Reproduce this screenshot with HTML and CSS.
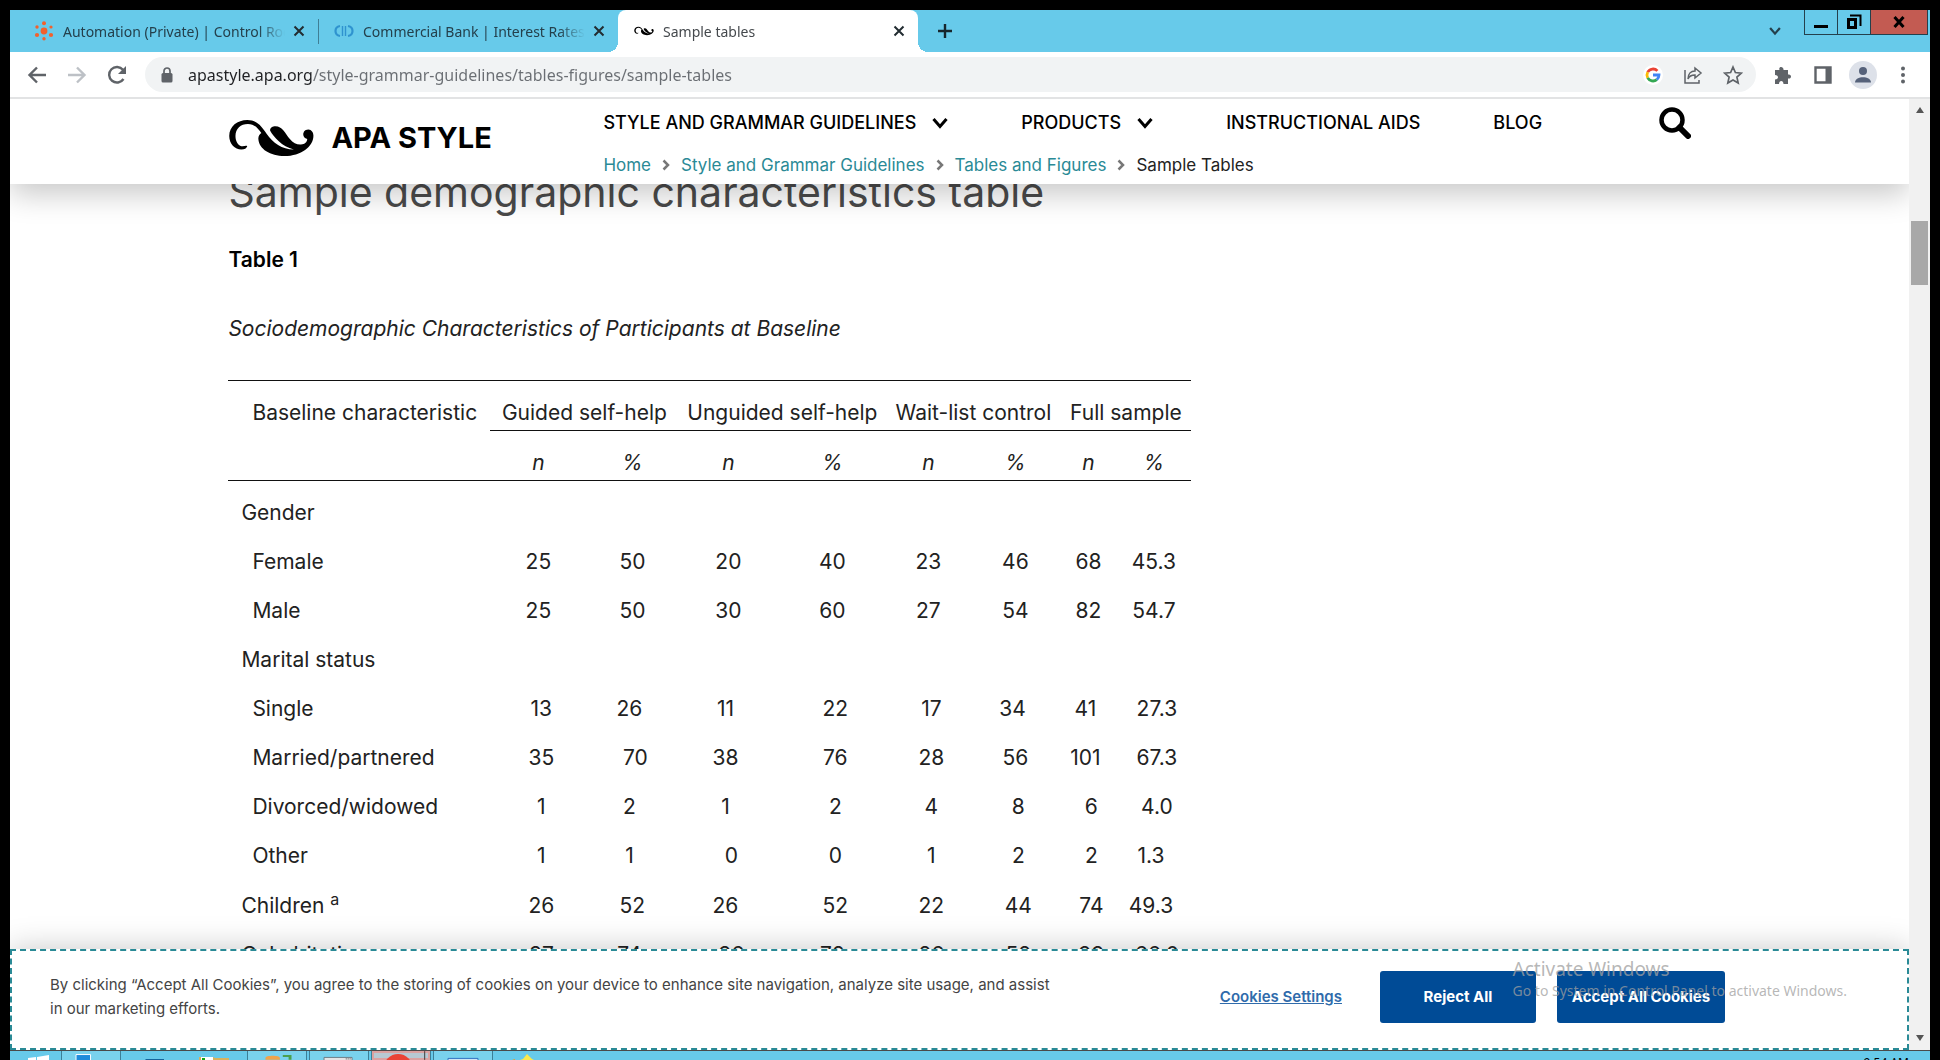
FILE: index.html
```html
<!DOCTYPE html>
<html lang="en">
<head>
<meta charset="utf-8">
<meta name="viewport" content="width=device-width, initial-scale=1">
<title>Sample tables</title>
<link rel="stylesheet" href="styles.css">
</head>
<body>
<svg class="defs" aria-hidden="true">
  <symbol id="apa-mark" viewBox="40 54 264 116">
    <path d="M98 137C96 143 90 147 80 147C60 147 43 130 43 106C43 76 68 57 98 57C128 57 143 78 157 99C176 127 204 147 240 147C204 139 178 108 168 90C166 81 175 76 184 76C205 76 214 98 228 115C238 127 250 133 262 132C274 131 281 124 281 115C272 112 268 106 269 98C271 89 278 86 285 86C294 87 300 94 300 105C300 138 262 167 212 167C168 167 134 146 132 116C131 107 135 101 141 97C130 80 118 69 100 69C78 69 62 83 62 106C62 122 70 134 80 137C87 139 93 134 98 137Z"/>
  </symbol>
  <symbol id="close" viewBox="0 0 12 12"><path d="M1.5 1.5l9 9M10.5 1.5l-9 9" fill="none" stroke="currentColor" stroke-width="2"/></symbol>
  <symbol id="chev-down" viewBox="0 0 16 12"><path d="M1.5 2l6.500 7.500L14.500 2" fill="none" stroke="currentColor" stroke-width="3"/></symbol>
  <symbol id="chev-right" viewBox="0 0 8 12"><path d="M1.500 1.500L6 6l-4.500 4.500" fill="none" stroke="currentColor" stroke-width="2.500"/></symbol>
</svg>

<div class="browser">
  <div class="tabstrip">
    <div class="tab">
      <svg class="favicon" viewBox="0 0 20 20" fill="#f2612c"><circle cx="10" cy="10" r="3.400"/><circle cx="10" cy="2.300" r="2"/><circle cx="10" cy="17.700" r="1.700"/><circle cx="3" cy="6" r="1.700"/><circle cx="17" cy="6" r="1.600"/><circle cx="3" cy="14" r="2.100"/><circle cx="17" cy="14" r="2.100"/></svg>
      <span class="tab-title">Automation (Private) | Control Room</span>
      <button class="tab-close" aria-label="Close tab"><svg><use href="#close"/></svg></button>
    </div>
    <div class="tab divided">
      <svg class="favicon" viewBox="0 0 20 20" fill="none" stroke="#2f93cf" stroke-width="2.200"><path d="M6 5C0 6 0 14 6 15M14 5c6 1 6 9 0 10"/><path d="M8.500 5v10M11.500 5v10" stroke-width="1.400"/></svg>
      <span class="tab-title">Commercial Bank | Interest Rates</span>
      <button class="tab-close" aria-label="Close tab"><svg><use href="#close"/></svg></button>
    </div>
    <div class="tab active">
      <svg class="favicon"><use href="#apa-mark"/></svg>
      <span class="tab-title">Sample tables</span>
      <button class="tab-close" aria-label="Close tab"><svg><use href="#close"/></svg></button>
    </div>
    <button class="new-tab" aria-label="New tab"><svg viewBox="0 0 16 16"><path d="M8 1v14M1 8h14" stroke="currentColor" stroke-width="2.400"/></svg></button>
    <button class="tab-search" aria-label="Search tabs"><svg><use href="#chev-down"/></svg></button>
    <div class="win-buttons">
      <button aria-label="Minimize"><svg viewBox="0 0 16 16"><path d="M1 12.500h14" stroke="currentColor" stroke-width="3"/></svg></button>
      <button aria-label="Restore"><svg viewBox="0 0 16 16"><path d="M2.500 5.500h7v8h-7z" fill="none" stroke="currentColor" stroke-width="3"/><path d="M4 1.500h10.500V12" fill="none" stroke="currentColor" stroke-width="2"/></svg></button>
      <button class="win-close" aria-label="Close"><svg viewBox="0 0 16 16"><path d="M3.500 3l9 10M12.500 3l-9 10" stroke="currentColor" stroke-width="3"/></svg></button>
    </div>
  </div>

  <div class="toolbar">
    <button class="tool" aria-label="Back"><svg viewBox="0 0 20 20"><path d="M19 10H3M10 2.500L2.500 10l7.500 7.500" fill="none" stroke="#5f6368" stroke-width="2.400"/></svg></button>
    <button class="tool" aria-label="Forward"><svg viewBox="0 0 20 20"><path d="M1 10h16M10 2.500l7.500 7.500-7.500 7.500" fill="none" stroke="#bdc1c6" stroke-width="2.400"/></svg></button>
    <button class="tool" aria-label="Reload"><svg viewBox="0 0 20 20"><path d="M16.500 14A7.800 7.800 0 1 1 16 4.800" fill="none" stroke="#5f6368" stroke-width="2.400"/><path d="M19 1v8h-8z" fill="#5f6368"/></svg></button>
    <div class="omnibox">
      <svg class="lock" viewBox="0 0 12 16"><rect x="0.500" y="6" width="11" height="9.500" rx="1.500" fill="#5f6368"/><path d="M3 7V4a3 3 0 0 1 6 0v3" fill="none" stroke="#5f6368" stroke-width="1.700"/></svg>
      <input class="url" type="text" aria-label="Address" value="apastyle.apa.org/style-grammar-guidelines/tables-figures/sample-tables">
      <button class="tool" aria-label="Google"><svg viewBox="0 0 20 20"><circle cx="10" cy="10" r="10" fill="#fff"/><g fill="none" stroke-width="2.800"><path d="M14.400 5.900A6 6 0 0 0 4.700 7.200" stroke="#ea4335"/><path d="M4.700 7.200a6 6 0 0 0 0 5.600" stroke="#fbbc05"/><path d="M4.700 12.800a6 6 0 0 0 9.100 1.800" stroke="#34a853"/><path d="M13.800 14.600A6 6 0 0 0 16 10h-6" stroke="#4285f4"/></g></svg></button>
      <button class="tool" aria-label="Share"><svg viewBox="0 0 20 20" fill="none" stroke="#5f6368" stroke-width="1.500"><path d="M2 5v13h14v-3"/><path d="M12 3l6 5-6 5v-3c-4 0-6 1.500-7 4 0-5 3-8 7-8z"/></svg></button>
      <button class="tool" aria-label="Bookmark"><svg viewBox="0 0 20 20"><path d="M10 2l2.400 5.500 6 .6-4.500 4 1.300 5.900L10 15l-5.200 3 1.300-5.900-4.500-4 6-.6z" fill="none" stroke="#5f6368" stroke-width="1.700"/></svg></button>
    </div>
    <button class="tool" aria-label="Extensions"><svg viewBox="0 0 20 20"><path d="M2 5h4.500C5 1 11 1 10.500 5H15v4.500c4-1 4 5 0 4V19h-4.500c0-4-4.500-4-4.500 0H2v-4.500c4 0 4-4.500 0-4.500z" fill="#5f6368"/></svg></button>
    <button class="tool" aria-label="Side panel"><svg viewBox="0 0 20 20"><path d="M2.500 2.500h15v15h-15z" fill="none" stroke="#5f6368" stroke-width="2.400"/><path d="M12.500 2h5v16h-5z" fill="#5f6368"/></svg></button>
    <button class="tool" aria-label="Profile"><svg class="avatar" viewBox="0 0 28 28"><circle cx="14" cy="14" r="14" fill="#dde1e9"/><circle cx="14" cy="10" r="4" fill="#56627a"/><path d="M6 21.500c0-7 16-7 16 0z" fill="#56627a"/></svg></button>
    <button class="tool" aria-label="Menu"><svg viewBox="0 0 20 20" fill="#5f6368"><circle cx="10" cy="3.500" r="2"/><circle cx="10" cy="10" r="2"/><circle cx="10" cy="16.500" r="2"/></svg></button>
  </div>

  <div class="viewport">
    <div class="page">
      <header class="site-header">
        <div class="container header-row">
          <a class="brand" href="#"><svg class="brand-mark"><use href="#apa-mark"/></svg><span>APA STYLE</span></a>
          <div class="header-nav">
            <nav class="main-nav" aria-label="Main">
              <a href="#">STYLE AND GRAMMAR GUIDELINES<svg><use href="#chev-down"/></svg></a>
              <a href="#">PRODUCTS<svg><use href="#chev-down"/></svg></a>
              <a href="#">INSTRUCTIONAL AIDS</a>
              <a href="#">BLOG</a>
            </nav>
            <nav class="crumbs" aria-label="Breadcrumb">
              <a href="#">Home</a><svg><use href="#chev-right"/></svg>
              <a href="#">Style and Grammar Guidelines</a><svg><use href="#chev-right"/></svg>
              <a href="#">Tables and Figures</a><svg><use href="#chev-right"/></svg>
              <span>Sample Tables</span>
            </nav>
          </div>
          <button class="search" aria-label="Search"><svg viewBox="0 0 32 32"><circle cx="13" cy="13" r="10.500" fill="none" stroke="currentColor" stroke-width="4.500"/><path d="M20.500 20.500L29 29" stroke="currentColor" stroke-width="6" stroke-linecap="round"/></svg></button>
        </div>
      </header>

      <main class="content">
        <div class="container">
          <h1>Sample demographic characteristics table</h1>
          <p class="table-number">Table 1</p>
          <p class="table-title">Sociodemographic Characteristics of Participants at Baseline</p>
          <table class="data">
            <colgroup><col class="c-label"><col class="c-n1"><col class="c-p1"><col class="c-n2"><col class="c-p2"><col class="c-n3"><col class="c-p3"><col class="c-n4"><col class="c-p4"></colgroup>
            <thead>
              <tr><th class="corner" scope="col">Baseline characteristic</th><th class="group" colspan="2" scope="colgroup">Guided self-help</th><th class="group" colspan="2" scope="colgroup">Unguided self-help</th><th class="group" colspan="2" scope="colgroup">Wait-list control</th><th class="group" colspan="2" scope="colgroup">Full sample</th></tr>
              <tr class="units"><td></td><th scope="col">n</th><th scope="col">%</th><th scope="col">n</th><th scope="col">%</th><th scope="col">n</th><th scope="col">%</th><th scope="col">n</th><th scope="col">%</th></tr>
            </thead>
            <tbody>
              <tr><th scope="row">Gender</th><td colspan="8"></td></tr>
              <tr class="sub"><th scope="row">Female</th><td>25</td><td>50</td><td>20</td><td>40</td><td>23</td><td>46</td><td>68</td><td>45.3</td></tr>
              <tr class="sub"><th scope="row">Male</th><td>25</td><td>50</td><td>30</td><td>60</td><td>27</td><td>54</td><td>82</td><td>54.7</td></tr>
              <tr><th scope="row">Marital status</th><td colspan="8"></td></tr>
              <tr class="sub"><th scope="row">Single</th><td>&nbsp;13</td><td>26&nbsp;</td><td>11&nbsp;</td><td>&nbsp;22</td><td>&nbsp;17</td><td>34&nbsp;</td><td>41&nbsp;</td><td>&nbsp;27.3</td></tr>
              <tr class="sub"><th scope="row">Married/partnered</th><td>&nbsp;35</td><td>&nbsp;70</td><td>38&nbsp;</td><td>&nbsp;76</td><td>&nbsp;28</td><td>56</td><td>101&nbsp;</td><td>&nbsp;67.3</td></tr>
              <tr class="sub"><th scope="row">Divorced/widowed</th><td>&nbsp;1</td><td>2&nbsp;</td><td>1&nbsp;</td><td>&nbsp;2</td><td>&nbsp;4</td><td>&nbsp;8</td><td>&nbsp;6</td><td>&nbsp;4.0</td></tr>
              <tr class="sub"><th scope="row">Other</th><td>&nbsp;1</td><td>1&nbsp;</td><td>&nbsp;0</td><td>&nbsp;0</td><td>&nbsp;1</td><td>&nbsp;2</td><td>&nbsp;2</td><td>1.3&nbsp;</td></tr>
              <tr><th scope="row">Children <sup>a</sup></th><td>&nbsp;26</td><td>52</td><td>26&nbsp;</td><td>&nbsp;52</td><td>&nbsp;22</td><td>&nbsp;44</td><td>&nbsp;74</td><td>49.3&nbsp;</td></tr>
              <tr><th scope="row">Cohabitating</th><td>&nbsp;37</td><td>74&nbsp;</td><td>&nbsp;36</td><td>72</td><td>&nbsp;26</td><td>&nbsp;52</td><td>&nbsp;99</td><td>&nbsp;66.0</td></tr>
            </tbody>
          </table>
        </div>
      </main>

      <section class="cookies" aria-label="Cookie consent">
        <p>By clicking “Accept All Cookies”, you agree to the storing of cookies on your device to enhance site navigation, analyze site usage, and assist in our marketing efforts.</p>
        <div class="cookie-actions">
          <a href="#">Cookies Settings</a>
          <button class="reject">Reject All</button>
          <button class="accept">Accept All Cookies</button>
        </div>
      </section>
      <div class="watermark"><div class="wm-title">Activate Windows</div><div class="wm-text">Go to System in Control Panel to activate Windows.</div></div>
    </div>
    <div class="scrollbar">
      <svg viewBox="0 0 12 10"><path d="M6 2l4 6H2z" fill="#555"/></svg>
      <div class="thumb"></div>
      <svg class="down" viewBox="0 0 12 10"><path d="M6 8l4-6H2z" fill="#555"/></svg>
    </div>
  </div>
</div>

<footer class="taskbar">
  <button class="task start" aria-label="Start"><svg viewBox="0 0 50 9"><path d="M18 9V7l8-1v3zM27 9V6l12-2v5z" fill="#fff"/></svg></button>
  <button class="task open" aria-label="Server Manager"><svg viewBox="0 0 60 9"><path d="M14.500 10V3.500h15V10" fill="#1f8bdb" stroke="#fff"/></svg></button>
  <button class="task" aria-label="PowerShell"><svg viewBox="0 0 60 9"><path d="M24 9l1-1h18v1z" fill="#14649c"/></svg></button>
  <button class="task" aria-label="File Explorer"><svg viewBox="0 0 60 9"><path d="M15 9V6h14l2 1h14v2z" fill="#d8b25c"/><path d="M17 6h12v3H17z" fill="#fff"/><path d="M18 7h3v2h-3z" fill="#12a512"/></svg></button>
  <button class="task open" aria-label="Users"><svg viewBox="0 0 60 9"><path d="M18 9V7c0-3 15-3 15 0v2z" fill="#f0a44b"/><path d="M36 4h9v5h-3V6h-6z" fill="#4aa04f"/></svg></button>
  <button class="task open" aria-label="Window"><svg viewBox="0 0 60 9"><path d="M14.500 10V6.500h29V10" fill="#e4e4e4" stroke="#6b7c85"/><path d="M37 8h5" stroke="#444" stroke-dasharray="1 1"/></svg></button>
  <button class="task current" aria-label="Chrome"><svg viewBox="0 0 60 9"><circle cx="27" cy="18" r="15" fill="#ea4335"/><path d="M54.500 0v9" stroke="#3a3a3a"/></svg></button>
  <button class="task open" aria-label="Application"><svg viewBox="0 0 60 9"><path d="M14.500 10V7.500h31V10" fill="#cfe6f5" stroke="#2d6fc0"/></svg></button>
  <button class="task" aria-label="Alerts"><svg viewBox="0 0 60 9"><path d="M34 3l5 5 2 1H27l3-1z" fill="#fbe94b"/><path d="M19 9l3-1v1z" fill="#e0a030"/></svg></button>
  <time class="clock">9:54 AM</time>
</footer>
</body>
</html>
```
FILE: styles.css
```css
*, *::before, *::after { box-sizing: border-box; }

:root {
  --sky: #67caea;
  --teal: #2a8a96;
  --ui: "Noto Sans", "Open Sans", sans-serif;
  --site: Inter, "Liberation Sans", sans-serif;
}

body {
  margin: 0;
  height: 100vh;
  padding: 10px 10px 0;
  display: flex;
  flex-direction: column;
  background: #000;
  font-family: var(--ui);
  overflow: hidden;
}

button {
  margin: 0;
  padding: 0;
  border: 0;
  background: none;
  color: inherit;
  font: inherit;
}

svg { display: block; flex: none; }
.defs { position: absolute; width: 0; height: 0; }

.browser {
  flex: 1;
  min-height: 0;
  display: flex;
  flex-direction: column;
  background: #fff;
}

/* Tab strip */
.tabstrip {
  display: flex;
  height: 42px;
  flex: none;
  padding: 0 2px 0 8px;
  background: var(--sky);
  color: #24404c;
}
.tab {
  display: flex;
  align-items: center;
  width: 300px;
  padding: 0 9px 0 16px;
  font-size: 14px;
  position: relative;
}
.tab.divided::before {
  content: "";
  position: absolute;
  left: 0;
  top: 9px;
  width: 1px;
  height: 25px;
  background: #3f7f96;
}
.tab.active {
  background: #fff;
  color: #45494d;
  border-radius: 8px 8px 0 0;
}
.tab.active::before, .tab.active::after {
  content: "";
  position: absolute;
  bottom: 0;
  width: 10px;
  height: 10px;
}
.tab.active::before { right: 100%; background: radial-gradient(circle at 0 0, transparent 10px, #fff 10px); }
.tab.active::after { left: 100%; background: radial-gradient(circle at 100% 0, transparent 10px, #fff 10px); }
.favicon { width: 20px; height: 20px; }
.tab-title {
  flex: 1;
  margin: 0 4px 0 9px;
  overflow: hidden;
  white-space: nowrap;
  -webkit-mask-image: linear-gradient(90deg, #000 88%, transparent 100%);
  mask-image: linear-gradient(90deg, #000 88%, transparent 100%);
}
.tab-close { padding: 4px; color: #222c31; }
.tab-close svg { width: 12px; height: 12px; }
.new-tab { padding: 0 18px 0 19px; color: #16262d; }
.new-tab svg { width: 16px; height: 16px; }
.tab-search { margin-left: auto; padding: 0 23px; color: #24404c; }
.tab-search svg { width: 12px; height: 10px; }
.win-buttons {
  display: flex;
  height: 25px;
  border: 1px solid #24404c;
  border-top: 0;
  color: #000;
}
.win-buttons button {
  display: grid;
  place-items: center;
  width: 33px;
  border-right: 1px solid #24404c;
}
.win-buttons .win-close { width: 56px; background: #c35b52; border-right: 0; }
.win-buttons svg { width: 16px; height: 16px; }

/* Toolbar */
.toolbar {
  display: flex;
  align-items: center;
  flex: none;
  height: 47px;
  padding: 0 7px;
  border-bottom: 2px solid #e2e3e4;
}
.tool { display: grid; place-items: center; width: 40px; height: 34px; }
.tool svg { width: 20px; height: 20px; }
.tool .avatar { width: 28px; height: 28px; }
.omnibox {
  display: flex;
  align-items: center;
  flex: 1;
  height: 35px;
  margin: 0 7px 0 8px;
  padding: 0 3px 0 16px;
  border-radius: 18px;
  background: #f1f3f4;
}
.lock { width: 12px; height: 16px; }
.url {
  flex: 1;
  min-width: 0;
  margin-left: 15px;
  padding: 0;
  border: 0;
  outline: 0;
  font: 16px/24px var(--ui);
  color: transparent;
  background: linear-gradient(90deg, #202124 124px, #6a6e73 124px);
  -webkit-background-clip: text;
  background-clip: text;
}

/* Web page */
.viewport { flex: 1; min-height: 0; display: flex; }
.page {
  flex: 1;
  min-width: 0;
  position: relative;
  display: flex;
  flex-direction: column;
  overflow: hidden;
  font-family: var(--site);
}
.container { width: 77%; margin: 0 auto; }
.site-header {
  position: relative;
  z-index: 1;
  flex: none;
  background: #fff;
  box-shadow: 0 10px 30px rgba(0, 0, 0, .22);
}
.header-row { display: flex; height: 85px; align-items: flex-start; }
.brand {
  display: flex;
  align-items: center;
  gap: 16px;
  width: 375px;
  padding-top: 19px;
  color: #000;
  font-size: 29px;
  line-height: 40px;
  font-weight: 700;
  text-decoration: none;
}
.brand-mark { width: 87px; height: 38px; }
.header-nav { flex: 1; padding-top: 11px; }
.main-nav {
  display: flex;
  gap: 73px;
  font-size: 18px;
  line-height: 26px;
  font-weight: 500;
}
.main-nav a {
  display: flex;
  align-items: center;
  gap: 16px;
  color: #000;
  text-decoration: none;
  white-space: nowrap;
}
.main-nav svg { width: 16px; height: 12px; }
.crumbs {
  display: flex;
  align-items: center;
  gap: 11px;
  margin-top: 16px;
  font-size: 17px;
  line-height: 26px;
  color: #222;
}
.crumbs a { color: var(--teal); text-decoration: none; }
.crumbs svg { width: 8px; height: 12px; color: #777; }
.search { padding-top: 8px; color: #000; }
.search svg { width: 32px; height: 32px; }

.content {
  flex: 1;
  min-height: 0;
  overflow: hidden;
  color: #222;
  font-size: 21px;
  line-height: 30px;
}
.content h1 {
  margin: -16px 0 29px;
  font-size: 41px;
  line-height: 48px;
  font-weight: 400;
  color: #4a4a4a;
}
.table-number { margin: 0 0 39px; font-weight: 600; color: #000; }
.table-title { margin: 0 0 36px; font-style: italic; }

.data {
  width: 963px;
  table-layout: fixed;
  border-collapse: separate;
  border-spacing: 0;
  border-top: 1px solid #111;
  line-height: 26px;
  text-align: center;
}
.c-label { width: 262px; }
.c-n1 { width: 96px; }
.c-p1 { width: 92px; }
.c-n2 { width: 100px; }
.c-p2 { width: 108px; }
.c-n3 { width: 84px; }
.c-p3 { width: 90px; }
.c-n4 { width: 56px; }
.c-p4 { width: 75px; }
.data th, .data td { padding: 19px 0 4px; font-weight: 400; white-space: nowrap; }
.data .group { border-bottom: 1px solid #111; }
.data .corner { padding-left: 24px; text-align: left; vertical-align: top; }
.units th { font-style: italic; }
.data .units > * { border-bottom: 1px solid #111; }
.data tbody th { padding-left: 13px; text-align: left; }
.data .sub th { padding-left: 24px; }
.data sup { font-size: 16px; line-height: 14px; }

/* Cookie banner */
.cookies {
  position: relative;
  z-index: 1;
  flex: none;
  display: flex;
  justify-content: space-between;
  align-items: center;
  min-height: 101px;
  padding: 0 182px 6px 38px;
  border: 2px dashed var(--teal);
  background: #fff;
  box-shadow: 0 0 30px rgba(0, 0, 0, .22);
  font-size: 15px;
}
.cookies p { flex: 0 1 1010px; margin: 0; line-height: 24px; color: #444; }
.cookie-actions { display: flex; align-items: center; }
.cookie-actions a { margin-right: 38px; font-weight: 600; color: #2f6bab; }
.cookie-actions button {
  height: 52px;
  border-radius: 3px;
  background: #004b96;
  color: #fff;
  font-weight: 700;
}
.reject { width: 156px; margin-right: 21px; }
.accept { width: 168px; }

.watermark {
  position: absolute;
  z-index: 2;
  right: 62px;
  bottom: 49px;
  color: rgba(160, 160, 160, .75);
  font-family: var(--ui);
  pointer-events: none;
}
.wm-title { font-size: 19px; line-height: 24px; }
.wm-text { font-size: 14px; line-height: 20px; }

.scrollbar {
  flex: none;
  display: flex;
  flex-direction: column;
  align-items: center;
  width: 21px;
  padding: 6px 0 7px;
  background: #f1f1f1;
}
.scrollbar svg { width: 12px; height: 10px; }
.scrollbar .down { margin-top: auto; }
.thumb { width: 17px; height: 64px; margin-top: 106px; background: #a8a8a8; }

/* Taskbar, cut off by the lower edge of the screen */
.taskbar {
  flex: none;
  display: flex;
  height: 10px;
  overflow: hidden;
  background: var(--sky);
  border-top: 1px solid #4a4a4a;
}
.task { flex: none; width: 63px; height: 9px; }
.task svg { width: 60px; height: 9px; }
.task.start { width: 51px; }
.task.start svg { width: 50px; }
.task.open, .task.current {
  width: 60px;
  margin-right: 2px;
  border: solid #3c7f97;
  border-width: 0 1px;
  background: #79d2ed;
}
.task.open svg, .task.current svg { width: 58px; }
.task.open + .task:not(.open):not(.current) { margin-left: -2px; }
.task.current { background: #b7c9d3; box-shadow: inset 0 0 0 2px #dba1a0; }
.clock {
  margin-left: auto;
  padding: 4px 21px 0 0;
  font-size: 12px;
  line-height: 16px;
  color: #000;
}
```
